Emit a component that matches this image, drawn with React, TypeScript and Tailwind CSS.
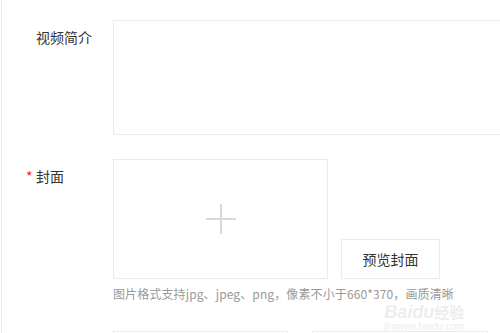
export default function App() {
  return (
    <div className="relative w-[500px] h-[333px] overflow-hidden bg-white pl-px font-['Noto_Sans_CJK_SC',sans-serif]">
      <div className="h-full border-l border-[#ececec] pt-[20px]">
        {/* 视频简介 */}
        <div className="flex">
          <div className="w-[111px] shrink-0 pl-[34px] pt-[7px] text-[14px] leading-[20px] text-[#333]">视频简介</div>
          <div className="w-[420px] h-[115px] shrink-0 border border-[#ebebeb]" />
        </div>

        {/* 封面 */}
        <div className="flex mt-[24px]">
          <div className="w-[111px] shrink-0 pl-[34px] pt-[7px] text-[14px] leading-[20px] text-[#333]">
            <span className="relative">
              <span className="absolute -left-[10px] top-0 text-[#f5222d]">*</span>
              封面
            </span>
          </div>
          <div className="flex flex-col">
            <div className="flex items-end">
              <div className="w-[215px] h-[120px] border border-[#ebebeb] flex items-center justify-center">
                <svg width="30" height="30" viewBox="0 0 30 30">
                  <path d="M15 0v30M0 15h30" stroke="#d9d9d9" strokeWidth="2" />
                </svg>
              </div>
              <button className="ml-[13px] w-[99px] h-[40px] border border-[#ebebeb] bg-white text-[14px] text-[#333]">预览封面</button>
            </div>
            <div className="mt-[6px] text-[12px] leading-[18px] text-[#999] whitespace-nowrap tracking-[0.12px]">
              图片格式支持jpg、jpeg、png，像素不小于660*370，画质清晰
            </div>
          </div>
        </div>

        {/* next row */}
        <div className="flex mt-[28px]">
          <div className="w-[111px] shrink-0" />
          <div className="flex gap-[24px]">
            <div className="w-[175px] h-[40px] border border-[#ebebeb]" />
            <div className="w-[176px] h-[40px] border border-[#ebebeb]" />
          </div>
        </div>
      </div>

      {/* watermark */}
      <div className="absolute left-[384px] top-[303px] flex flex-col items-center text-[#ededed] font-['Liberation_Sans',sans-serif] pointer-events-none">
        <div className="flex items-center h-[18px] text-[18px] font-bold leading-[18px] italic">
          Baidu
          <span className="not-italic font-['Noto_Sans_CJK_SC',sans-serif] text-[15px] leading-[18px]">经验</span>
        </div>
        <div className="text-[10px] leading-[12px]">jingyan.baidu.com</div>
      </div>
    </div>
  );
}
